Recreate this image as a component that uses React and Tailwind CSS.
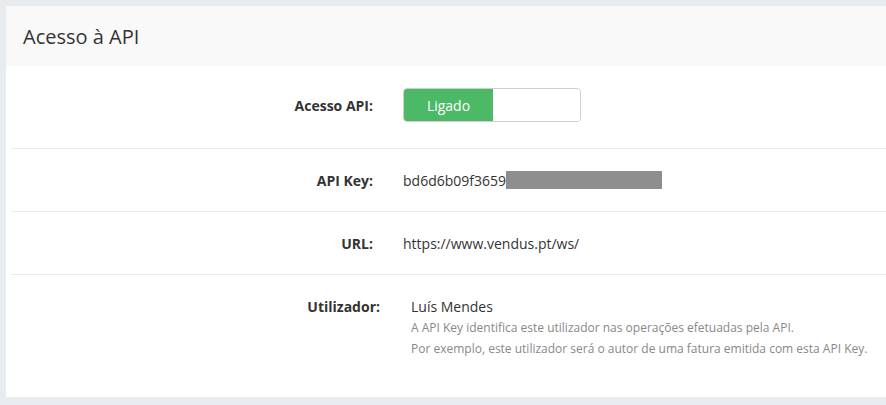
export default function App() {
  const font = { fontFamily: '"Open Sans", "Liberation Sans", sans-serif' };

  return (
    <div className="min-h-screen bg-[#e9ecef] pt-[6px] pl-[6px] text-[#333]" style={font}>
      <div className="bg-white h-[391px]">
        {/* Header */}
        <div className="h-[60px] bg-[#f9f9f9] flex items-center pl-[17px] pt-[1px] text-[20px] text-[#333]">
          Acesso à API
        </div>

        {/* Body */}
        <div className="pl-[5px]">
          {/* Acesso API */}
          <div className="flex items-center pt-[22px] pb-[26px] border-b border-[#ebebeb]">
            <div className="w-[362px] text-right text-[14px] font-bold">Acesso API:</div>
            <div className="ml-[30px] flex w-[178px] h-[34px] rounded-[4px] border border-[#cfcfcf] overflow-hidden">
              <div className="w-[89px] bg-[#4cb966] text-white text-[14px] flex items-center justify-center">
                Ligado
              </div>
              <div className="flex-1 bg-white" />
            </div>
          </div>

          {/* API Key */}
          <div className="flex items-center h-[63px] border-b border-[#ebebeb]">
            <div className="w-[362px] text-right text-[14px] font-bold">API Key:</div>
            <div className="ml-[30px] flex items-center text-[14px]">
              <span>bd6d6b09f3659</span>
              <span className="inline-block w-[156px] h-[18px] bg-[#8e8e8e]" />
            </div>
          </div>

          {/* URL */}
          <div className="flex items-center h-[63px] border-b border-[#ebebeb]">
            <div className="w-[362px] text-right text-[14px] font-bold">URL:</div>
            <div className="ml-[30px] text-[14px]">https://www.vendus.pt/ws/</div>
          </div>

          {/* Utilizador */}
          <div className="flex items-start pt-[22px]">
            <div className="w-[369px] text-right text-[14px] font-bold leading-[20px]">Utilizador:</div>
            <div className="ml-[31px]">
              <div className="text-[14px] leading-[20px]">Luís Mendes</div>
              <div className="text-[12px] leading-[21px] text-[#888]">
                A API Key identifica este utilizador nas operações efetuadas pela API.
              </div>
              <div className="text-[12px] leading-[21px] text-[#888]">
                Por exemplo, este utilizador será o autor de uma fatura emitida com esta API Key.
              </div>
            </div>
          </div>
        </div>
      </div>
    </div>
  );
}
